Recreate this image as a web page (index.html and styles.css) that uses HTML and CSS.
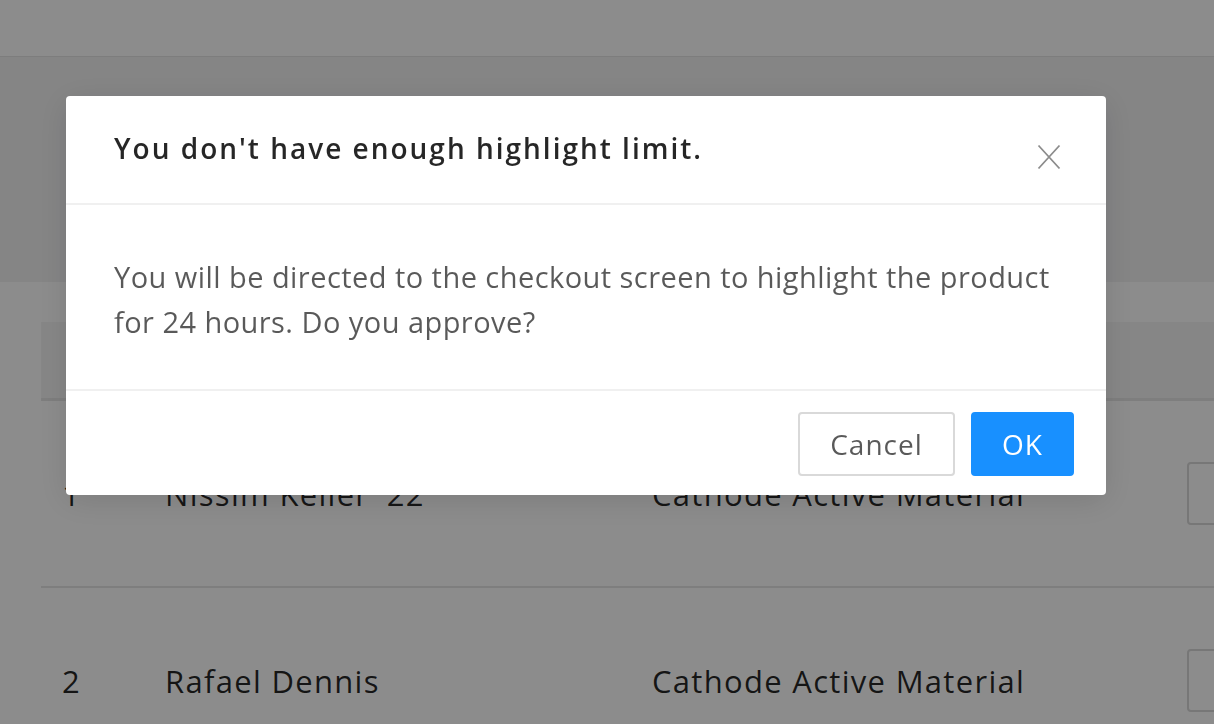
FILE: index.html
```html
<!DOCTYPE html>
<html lang="en">
<head>
<meta charset="utf-8">
<title>Highlight limit</title>
<link rel="stylesheet" href="styles.css">
</head>
<body>
<div class="page">
  <header class="topbar"></header>
  <section class="band"></section>
  <section class="card">
    <div class="table">
      <div class="thead"></div>
      <div class="row">
        <span class="c-num">1</span>
        <span class="c-name">Nissim Keller '22</span>
        <span class="c-type">Cathode Active Material</span>
        <span class="c-act"><span class="ghost-btn"></span></span>
      </div>
      <div class="row">
        <span class="c-num">2</span>
        <span class="c-name">Rafael Dennis</span>
        <span class="c-type">Cathode Active Material</span>
        <span class="c-act"><span class="ghost-btn"></span></span>
      </div>
    </div>
  </section>
</div>

<div class="mask"></div>
<div class="modal" role="dialog">
  <div class="modal-header">
    <h2 class="modal-title">You don't have enough highlight limit.</h2>
    <button class="modal-close" aria-label="Close">
      <svg width="24" height="26" viewBox="0 0 24 26"><path d="M1.5 1.5 L22.5 24.5 M22.5 1.5 L1.5 24.5" stroke="#8c8c8c" stroke-width="1.8" fill="none"/></svg>
    </button>
  </div>
  <div class="modal-body">
    <p>You will be directed to the checkout screen to highlight the product for 24 hours. Do you approve?</p>
  </div>
  <div class="modal-footer">
    <button class="btn btn-default">Cancel</button>
    <button class="btn btn-primary">OK</button>
  </div>
</div>
</body>
</html>
```

FILE: styles.css
```css
* { box-sizing: border-box; }
html, body { margin: 0; padding: 0; }
body {
  font-family: "Open Sans", "Noto Sans", sans-serif;
  background: #ffffff;
  width: 1214px;
  height: 724px;
  overflow: hidden;
}
.page {
  display: flex;
  flex-direction: column;
  height: 724px;
  overflow: hidden;
}
.topbar {
  height: 57px;
  flex-shrink: 0;
  background: #ffffff;
  border-bottom: 1px solid #e4e4e4;
}
.band {
  height: 225px;
  flex-shrink: 0;
  background: #f2f2f3;
}
.card {
  flex: 1;
  min-height: 0;
  overflow: hidden;
  background: #ffffff;
  padding: 40px 0 0 41px;
}
.table { display: flex; flex-direction: column; }
.thead {
  height: 79px;
  flex-shrink: 0;
  background: #f5f5f5;
  border-bottom: 3px solid #e6e6e6;
}
.row {
  height: 187px;
  flex-shrink: 0;
  display: flex;
  align-items: center;
  overflow: hidden;
  border-bottom: 2px solid #e6e6e6;
  font-size: 31px;
  letter-spacing: 1.3px;
  color: rgba(0,0,0,0.85);
}
.row > span { flex-shrink: 0; }
.c-num { width: 124px; padding-left: 21px; }
.c-name { width: 487px; }
.c-type { width: 535px; }
.c-act { width: 80px; }
.ghost-btn {
  display: block;
  width: 80px;
  height: 63px;
  border: 2px solid #d9d9d9;
  border-radius: 4px;
}

.mask {
  position: fixed;
  inset: 0;
  background: rgba(0,0,0,0.45);
}
.modal {
  position: fixed;
  left: 66px;
  top: 96px;
  width: 1040px;
  background: #ffffff;
  border-radius: 4px;
  box-shadow: 0 6px 32px rgba(0,0,0,0.12);
}
.modal-header {
  height: 109px;
  display: flex;
  align-items: flex-start;
  justify-content: space-between;
  padding: 0 32px 0 48px;
  border-bottom: 2px solid #f0f0f0;
}
.modal-title {
  margin: 0;
  padding-top: 38px;
  font-size: 28px;
  line-height: 1;
  font-weight: 600;
  letter-spacing: 2px;
  color: rgba(0,0,0,0.85);
}
.modal-close {
  margin-top: 48px;
  margin-right: 13px;
  width: 24px;
  height: 26px;
  padding: 0;
  border: 0;
  background: none;
}
.modal-close svg { display: block; }
.modal-body {
  height: 186px;
  padding: 49px 40px 0 48px;
  border-bottom: 2px solid #f0f0f0;
}
.modal-body p {
  margin: 0;
  font-size: 29px;
  line-height: 45px;
  letter-spacing: 0.45px;
  color: rgba(0,0,0,0.65);
}
.modal-footer {
  height: 104px;
  display: flex;
  justify-content: flex-end;
  align-items: flex-start;
  gap: 16px;
  padding: 21px 32px 0 0;
}
.btn {
  height: 64px;
  font-family: inherit;
  font-size: 28px;
  letter-spacing: 1px;
  border-radius: 4px;
  padding: 0;
  cursor: pointer;
}
.btn-default {
  width: 157px;
  background: #ffffff;
  border: 2px solid #d9d9d9;
  color: rgba(0,0,0,0.65);
}
.btn-primary {
  width: 103px;
  background: #1890ff;
  border: 2px solid #1890ff;
  color: #ffffff;
}
```
